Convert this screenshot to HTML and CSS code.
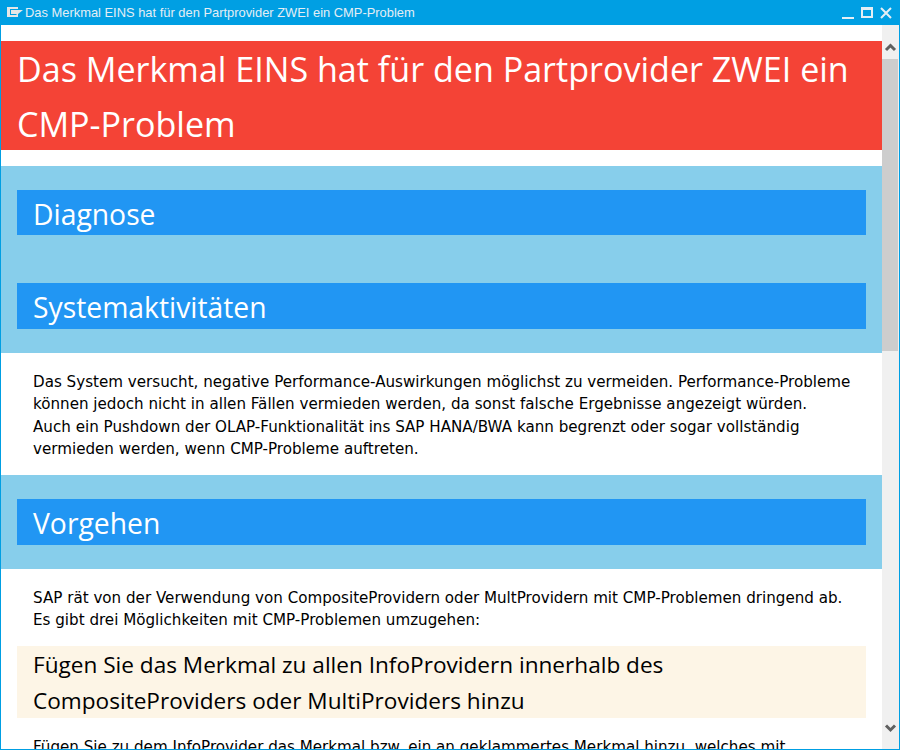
FILE: index.html
```html
<!DOCTYPE html>
<html>
<head>
  <title>Das Merkmal EINS hat für den Partprovider ZWEI ein CMP-Problem</title>
  <meta name="viewport" content="width=device-width, initial-scale=1.0">
  <link rel="stylesheet" href="styles.css">
</head>
<body>
  <div class="window">
    <div class="titlebar">
      <svg class="app-icon" width="16" height="11" viewBox="0 0 16 11">
        <path d="M0 0h11v2H3v6h6l2-2v4H0z" fill="#e6e6e6"/>
        <path d="M4 3h12l-5 4H4z" fill="#e6e6e6"/>
      </svg>
      <span class="window-title">Das Merkmal EINS hat für den Partprovider ZWEI ein CMP-Problem</span>
      <div class="window-buttons">
        <svg width="12" height="12" viewBox="0 0 12 12"><rect x="0" y="10" width="12" height="2" fill="#e4eef5"/></svg>
        <svg width="12" height="12" viewBox="0 0 12 12"><path d="M0 0h12v11H0z M2 3v6h8V3z" fill="#e4eef5" fill-rule="evenodd"/></svg>
        <svg width="12" height="12" viewBox="0 0 12 12"><path d="M1 1l10 10M11 1L1 11" stroke="#e4eef5" stroke-width="2" fill="none"/></svg>
      </div>
    </div>
    <div class="client">
      <div class="content">
        <h1 class="error-head">Das Merkmal EINS hat für den Partprovider ZWEI ein CMP-Problem</h1>
        <div class="section">
          <h2 class="section-head">Diagnose</h2>
        </div>
        <div class="section">
          <h2 class="section-head">Systemaktivitäten</h2>
        </div>
        <div class="text">
          <p>Das System versucht, negative Performance-Auswirkungen möglichst zu vermeiden. Performance-Probleme können jedoch nicht in allen Fällen vermieden werden, da sonst falsche Ergebnisse angezeigt würden.</p>
          <p>Auch ein Pushdown der OLAP-Funktionalität ins SAP HANA/BWA kann begrenzt oder sogar vollständig vermieden werden, wenn CMP-Probleme auftreten.</p>
        </div>
        <div class="section">
          <h2 class="section-head">Vorgehen</h2>
        </div>
        <div class="text">
          <p>SAP rät von der Verwendung von CompositeProvidern oder MultProvidern mit CMP-Problemen dringend ab.</p>
          <p>Es gibt drei Möglichkeiten mit CMP-Problemen umzugehen:</p>
        </div>
        <h3 class="option-head">Fügen Sie das Merkmal zu allen InfoProvidern innerhalb des CompositeProviders oder MultiProviders hinzu</h3>
        <div class="text">
          <p>Fügen Sie zu dem InfoProvider das Merkmal bzw. ein an geklammertes Merkmal hinzu, welches mit</p>
        </div>
      </div>
      <div class="scrollbar">
        <svg class="arrow-up" width="17" height="19" viewBox="0 0 17 19"><path d="M4 10l4.500-4.500L13 10" stroke="#606060" stroke-width="3" fill="none"/></svg>
        <div class="track"><div class="thumb"></div></div>
        <svg class="arrow-down" width="17" height="19" viewBox="0 0 17 19"><path d="M4 7.500l4.500 4.500L13 7.500" stroke="#606060" stroke-width="3" fill="none"/></svg>
      </div>
    </div>
  </div>
</body>
</html>
```

FILE: styles.css
```css
html, body {
  margin: 0;
  height: 100%;
  overflow: hidden;
}
.window {
  width: 900px;
  height: 750px;
  box-sizing: border-box;
  display: flex;
  flex-direction: column;
  background: #009fe3;
  padding: 0 1px 1px 1px;
}
.titlebar {
  height: 25px;
  flex: none;
  display: flex;
  align-items: center;
  padding: 0 7px 0 6px;
  color: #e4eef5;
  font-family: "Liberation Sans", Arial, sans-serif;
  font-size: 12.9px;
}
.app-icon {
  margin-right: 2px;
}
.window-buttons {
  margin-left: auto;
  display: flex;
  gap: 7px;
}
.client {
  flex: 1;
  min-height: 0;
  display: flex;
  background: white;
}
.content {
  flex: 1;
  min-width: 0;
  overflow: hidden;
  padding-top: 16px;
  font-family: "DejaVu Sans", Verdana, sans-serif;
  font-size: 15.13px;
  line-height: 22.5px;
  color: #000;
}
.error-head {
  box-sizing: border-box;
  height: 108.8px;
  margin: 0 0 16px 0;
  padding: 1px 16px 0 16px;
  background: #f44336;
  color: white;
  font-family: "Open Sans", sans-serif;
  font-size: 34.1px;
  font-weight: 400;
  line-height: 54.5px;
}
.section {
  background: #87ceeb;
  padding: 24px 16px;
}
.section-head {
  margin: 0;
  padding: 3px 16px 0 16px;
  background: #2196f3;
  color: white;
  font-family: "Open Sans", sans-serif;
  font-size: 28.3px;
  font-weight: 400;
  line-height: 42.6px;
}
.text {
  padding: 18px 28px 14px 32px;
}
.text p {
  margin: 0;
}
.option-head {
  box-sizing: border-box;
  height: 72px;
  margin: 0 16px;
  padding: 1px 16px 0 16px;
  background: #fdf5e6;
  font-family: "Open Sans", sans-serif;
  font-size: 22.6px;
  font-weight: 400;
  line-height: 36.5px;
}
.scrollbar {
  width: 17px;
  flex: none;
  display: flex;
  flex-direction: column;
  background: #f0f0f0;
}
.arrow-up {
  flex: none;
  display: block;
  margin-top: 15px;
}
.arrow-down {
  flex: none;
  display: block;
  margin-bottom: 12px;
}
.track {
  flex: 1;
}
.thumb {
  width: 16px;
  height: 292px;
  background: #cdcdcd;
}
```
